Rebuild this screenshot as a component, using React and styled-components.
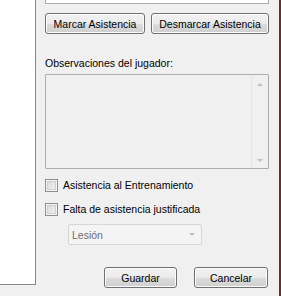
import React, { useState } from "react";
import styled, { createGlobalStyle } from "styled-components";

const GlobalStyle = createGlobalStyle`
  html, body {
    margin: 0;
    padding: 0;
    background: #f0f0f0;
  }
`;

const Window = styled.div`
  width: 281px;
  height: 296px;
  display: flex;
  background: #f0f0f0;
  font-family: "Liberation Sans", Arial, sans-serif;
  font-size: 10.5px;
  color: #000;
  overflow: hidden;
`;

const ListPanel = styled.div`
  width: 35px;
  height: 284px;
  background: #fff;
  border-right: 1px solid #828790;
  border-bottom: 1px solid #828790;
  flex-shrink: 0;
`;

const Main = styled.div`
  width: 224px;
  margin-left: 9px;
  display: flex;
  flex-direction: column;
`;

const Edge = styled.div`
  width: 2px;
  height: 296px;
  margin-left: auto;
  background: #6e2d2a;
`;

const CutBox = styled.div`
  height: 3px;
  background: #fff;
  border: 1px solid #abadb3;
  border-top: none;
`;

const Row = styled.div`
  display: flex;
  gap: ${(p) => p.$gap || 0}px;
  margin-top: ${(p) => p.$top || 0}px;
  margin-left: ${(p) => p.$left || 0}px;
`;

const Button = styled.button`
  width: ${(p) => p.$w}px;
  height: 21px;
  padding: 0;
  font: inherit;
  color: #000;
  border: 1px solid #707070;
  border-radius: 3px;
  box-shadow: inset 0 0 0 1px #fcfcfc;
  background: linear-gradient(#f2f2f2 0%, #ebebeb 50%, #dddddd 51%, #cfcfcf 100%);
  display: flex;
  align-items: center;
  justify-content: center;
`;

const Label = styled.div`
  line-height: 13px;
  margin-top: 23px;
`;

const TextArea = styled.div`
  margin-top: 4px;
  height: 93px;
  border: 1px solid #abadb3;
  border-radius: 1px;
  background: #f0f0f0;
  display: flex;
  justify-content: flex-end;
`;

const ScrollTrack = styled.div`
  width: 17px;
  border-left: 1px solid #e6e6e6;
  display: flex;
  flex-direction: column;
  justify-content: space-between;
  align-items: center;
  padding: 8px 0 6px;
  box-sizing: border-box;
`;

const Tri = styled.div`
  width: 0;
  height: 0;
  border-left: 3px solid transparent;
  border-right: 3px solid transparent;
  ${(p) =>
    p.$up
      ? "border-bottom: 3px solid #bfbfbf;"
      : "border-top: 3px solid #bfbfbf;"}
`;

const CheckRow = styled.label`
  display: flex;
  align-items: center;
  gap: 5px;
  height: 13px;
  margin-top: ${(p) => p.$top}px;
  line-height: 13px;
`;

const Box = styled.span`
  width: 13px;
  height: 13px;
  box-sizing: border-box;
  border: 1px solid #8e8f8f;
  background: linear-gradient(135deg, #d8d8d8 0%, #f4f4f4 100%);
  box-shadow: inset 0 0 0 1px #f4f4f4, inset 0 0 0 2px #cfcfcf;
  flex-shrink: 0;
`;

const Combo = styled.div`
  margin-top: 8px;
  margin-left: 23px;
  width: 134px;
  height: 21px;
  box-sizing: border-box;
  border: 1px solid #d5d5d5;
  border-radius: 2px;
  background: #f4f4f4;
  color: #6d6d6d;
  display: flex;
  align-items: center;
  justify-content: space-between;
  padding: 0 6px 0 3px;
`;

export default function App() {
  const [checks, setChecks] = useState([false, false]);
  const toggle = (i) => setChecks((c) => c.map((v, j) => (j === i ? !v : v)));

  return (
    <Window>
      <GlobalStyle />
      <ListPanel />
      <Main>
        <CutBox />
        <Row $top={9} $gap={6}>
          <Button $w={100}>Marcar Asistencia</Button>
          <Button $w={118}>Desmarcar Asistencia</Button>
        </Row>
        <Label>Observaciones del jugador:</Label>
        <TextArea>
          <ScrollTrack>
            <Tri $up />
            <Tri />
          </ScrollTrack>
        </TextArea>
        <CheckRow $top={10} onClick={() => toggle(0)}>
          <Box />
          Asistencia al Entrenamiento
        </CheckRow>
        <CheckRow $top={11} onClick={() => toggle(1)}>
          <Box />
          Falta de asistencia justificada
        </CheckRow>
        <Combo>
          <span>Lesión</span>
          <Tri />
        </Combo>
        <Row $top={22} $left={59} $gap={17}>
          <Button $w={73}>Guardar</Button>
          <Button $w={74}>Cancelar</Button>
        </Row>
      </Main>
      <Edge />
    </Window>
  );
}
